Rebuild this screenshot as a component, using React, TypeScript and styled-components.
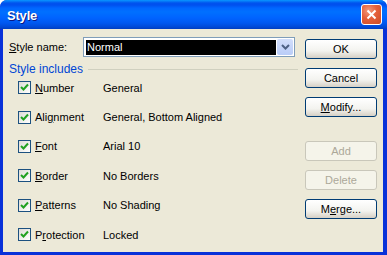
import styled, { createGlobalStyle } from "styled-components";

const Global = createGlobalStyle`
    html, body {
        margin: 0;
        padding: 0;
        background: #ffffff;
    }
    body {
        font-family: Tahoma, "Liberation Sans", Arial, sans-serif;
        font-size: 11px;
        color: #000;
    }
`;

const Window = styled.div`
    width: 387px;
    height: 255px;
    display: flex;
    flex-direction: column;
    background: #0831D9;
    border-radius: 7px 7px 0 0;
    overflow: hidden;
    box-sizing: border-box;
`;

const TitleBar = styled.div`
    height: 29px;
    flex: none;
    display: flex;
    align-items: center;
    justify-content: space-between;
    padding: 0 5px 0 7px;
    background: linear-gradient(to bottom,
        #0997FF 0px, #0053EE 3px, #0050EE 5px, #0066FF 8px,
        #0070FF 12px, #0063FF 18px, #0058F0 23px, #0049D6 27px, #003DC0 29px);
`;

const Title = styled.span`
    color: #fff;
    font-family: "Liberation Sans", Arial, sans-serif;
    font-weight: bold;
    font-size: 13px;
    text-shadow: 1px 1px 0 #0A1883;
    letter-spacing: -0.2px;
    margin-top: 1px;
`;

const CloseButton = styled.div`
    width: 21px;
    height: 21px;
    box-sizing: border-box;
    border: 1px solid #fff;
    border-radius: 3px;
    background: radial-gradient(circle at 35% 30%, #F39A7C 0%, #E45F3A 45%, #CC4B25 100%);
    display: flex;
    align-items: center;
    justify-content: center;
`;

const Body = styled.div`
    flex: 1;
    margin: 0 4px 3px 3px;
    background: #ECE9D8;
    display: flex;
    padding: 0 0 0 6px;
`;

const LeftColumn = styled.div`
    width: 286px;
    display: flex;
    flex-direction: column;
`;

const NameRow = styled.div`
    margin-top: 8px;
    display: flex;
    align-items: center;
    height: 20px;
`;

const NameLabel = styled.span`
    width: 74px;
`;

const Combo = styled.div`
    width: 212px;
    height: 20px;
    box-sizing: border-box;
    border: 1px solid #7F9DB9;
    background: #fff;
    display: flex;
    align-items: center;
    padding: 1px 1px 1px 2px;
    gap: 1px;
`;

const Selected = styled.div`
    flex: 1;
    height: 15px;
    background: #000;
    color: #fff;
    line-height: 15px;
    padding-left: 1px;
`;

const DropButton = styled.div`
    width: 16px;
    height: 16px;
    border-radius: 2px;
    background: linear-gradient(to bottom, #D2DEFB, #B9CCF7);
    display: flex;
    align-items: center;
    justify-content: center;
`;

const GroupHeader = styled.div`
    margin-top: 5px;
    height: 13px;
    display: flex;
    align-items: center;
    gap: 5px;
`;

const GroupTitle = styled.span`
    color: #0046D5;
    font-size: 12px;
`;

const Rule = styled.div`
    flex: 1;
    height: 1px;
    background: #D0D0BF;
    margin-top: 1px;
    margin-right: -3px;
`;

const Options = styled.div`
    margin-top: -2px;
    display: flex;
    flex-direction: column;
`;

const OptionRow = styled.div`
    height: 29.4px;
    display: flex;
    align-items: center;
    padding-left: 9px;
`;

const CheckBox = styled.div`
    width: 13px;
    height: 13px;
    box-sizing: border-box;
    border: 1px solid #1C5180;
    background: linear-gradient(135deg, #DCDBD5, #FFFFFF);
    display: flex;
    align-items: center;
    justify-content: center;
    margin-right: 4px;
`;

const OptionLabel = styled.span`
    width: 68px;
`;

const OptionValue = styled.span``;

const RightColumn = styled.div`
    margin-left: 10px;
    padding-top: 10px;
    display: flex;
    flex-direction: column;
    gap: 9px;
`;

const Button = styled.div<{ $disabled?: boolean; $gapTop?: boolean }>`
    width: 72px;
    height: 20px;
    box-sizing: border-box;
    border: 1px solid ${({ $disabled }) => ($disabled ? "#C9C7BA" : "#003C74")};
    border-radius: 3px;
    background: ${({ $disabled }) =>
        $disabled ? "#F5F4EA" : "linear-gradient(to bottom, #FFFFFF, #F3F3EF 60%, #D6D0C5)"};
    color: ${({ $disabled }) => ($disabled ? "#ACA899" : "#000")};
    display: flex;
    align-items: center;
    justify-content: center;
    margin-top: ${({ $gapTop }) => ($gapTop ? "15px" : "0")};
`;

const Key = styled.span`
    text-decoration: underline;
`;

function Check() {
    return (
        <svg width="9" height="9" viewBox="0 0 9 9">
            <path d="M1 4 L3.5 6.5 L8 1.5" stroke="#21A121" strokeWidth="2" fill="none" />
        </svg>
    );
}

const options: [React.ReactNode, string][] = [
    [<><Key>N</Key>umber</>, "General"],
    [<>Ali<Key>g</Key>nment</>, "General, Bottom Aligned"],
    [<><Key>F</Key>ont</>, "Arial 10"],
    [<><Key>B</Key>order</>, "No Borders"],
    [<><Key>P</Key>atterns</>, "No Shading"],
    [<>P<Key>r</Key>otection</>, "Locked"],
];

export default function App() {
    return (
        <>
            <Global />
            <Window>
                <TitleBar>
                    <Title>Style</Title>
                    <CloseButton>
                        <svg width="11" height="11" viewBox="0 0 11 11">
                            <path d="M1.5 1.5 L9.5 9.5 M9.5 1.5 L1.5 9.5" stroke="#fff" strokeWidth="2" />
                        </svg>
                    </CloseButton>
                </TitleBar>
                <Body>
                    <LeftColumn>
                        <NameRow>
                            <NameLabel><Key>S</Key>tyle name:</NameLabel>
                            <Combo>
                                <Selected>Normal</Selected>
                                <DropButton>
                                    <svg width="9" height="6" viewBox="0 0 9 6">
                                        <path d="M1 1 L4.5 4.5 L8 1" stroke="#4D6185" strokeWidth="2" fill="none" />
                                    </svg>
                                </DropButton>
                            </Combo>
                        </NameRow>
                        <GroupHeader>
                            <GroupTitle>Style includes</GroupTitle>
                            <Rule />
                        </GroupHeader>
                        <Options>
                            {options.map(([label, value], i) => (
                                <OptionRow key={i}>
                                    <CheckBox><Check /></CheckBox>
                                    <OptionLabel>{label}</OptionLabel>
                                    <OptionValue>{value}</OptionValue>
                                </OptionRow>
                            ))}
                        </Options>
                    </LeftColumn>
                    <RightColumn>
                        <Button>OK</Button>
                        <Button>Cancel</Button>
                        <Button><span><Key>M</Key>odify...</span></Button>
                        <Button $disabled $gapTop>Add</Button>
                        <Button $disabled>Delete</Button>
                        <Button><span>M<Key>e</Key>rge...</span></Button>
                    </RightColumn>
                </Body>
            </Window>
        </>
    );
}
